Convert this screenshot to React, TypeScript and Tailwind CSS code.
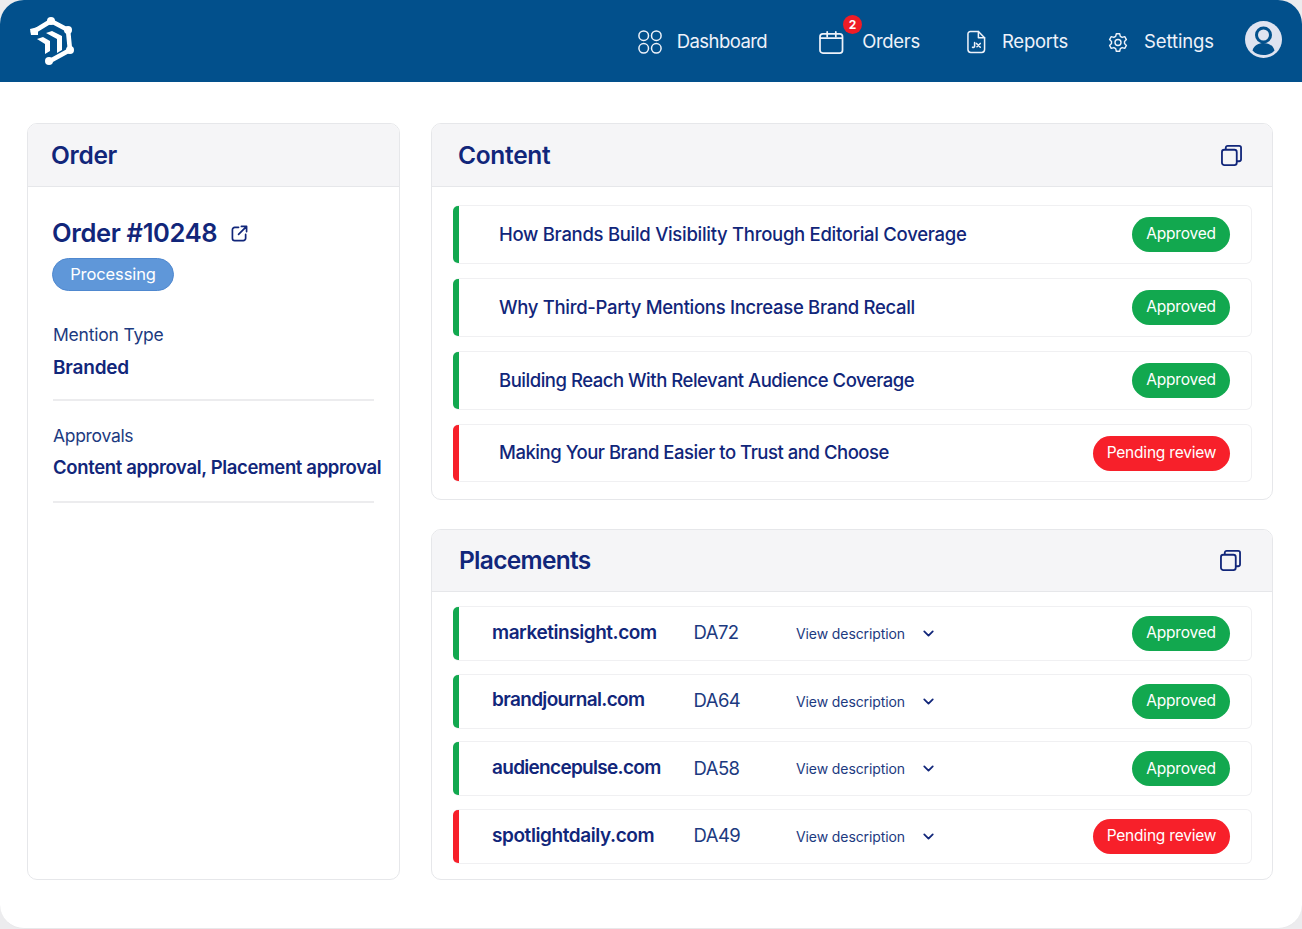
import React from 'react';
import { ChevronDown } from 'lucide-react';

const navy = 'text-[#11267a]';

function Logo() {
  return (
    <svg viewBox="28 15 48 52" className="w-[48px] h-[52px]" fill="none">
      <path d="M33 32 L51 21 L68 30 L70 50 L50 61" stroke="#fff" strokeWidth="4.6" strokeLinejoin="round" strokeLinecap="round" />
      <circle cx="51" cy="21" r="4" fill="#fff" />
      <circle cx="68" cy="30" r="4" fill="#fff" />
      <circle cx="70" cy="50" r="4" fill="#fff" />
      <circle cx="49" cy="61" r="4" fill="#fff" />
      <path d="M30 29 L38 27 L38 35 L31 35 Z" fill="#fff" />
      <path d="M46 33 L52 31 L62 36 L62 50 L57 53 L57 39 Z" fill="#fff" />
      <path d="M37 39 L43 37 L50 41 L50 51 L45 54 L45 44 Z" fill="#fff" />
    </svg>
  );
}

function DashIcon() {
  return (
    <svg viewBox="0 0 24 24" className="w-[24px] h-[24px]" fill="none" stroke="#eef2fa" strokeWidth="1.5">
      <circle cx="5.7" cy="5.7" r="4.8" />
      <circle cx="18.3" cy="5.7" r="4.8" />
      <circle cx="5.7" cy="18.3" r="4.8" />
      <circle cx="18.3" cy="18.3" r="4.8" />
    </svg>
  );
}

function CalendarIcon() {
  return (
    <svg viewBox="0 0 26 24" className="w-[25px] h-[23px]" fill="none" stroke="#eef2fa" strokeWidth="1.8" strokeLinecap="round">
      <rect x="1" y="3" width="23.5" height="20" rx="3" />
      <path d="M1.5 7.5 H24" />
      <path d="M8.5 1 V6 M17.5 1 V6" />
    </svg>
  );
}

function ReportIcon() {
  return (
    <svg viewBox="0 0 20 24" className="w-[19px] h-[24px]" fill="none" stroke="#eef2fa" strokeWidth="1.6" strokeLinejoin="round" strokeLinecap="round">
      <path d="M3.5 1 H12 L18.5 7.5 V20 A3 3 0 0 1 15.5 23 H4 A3 3 0 0 1 1 20 V3.5 A2.5 2.5 0 0 1 3.5 1 Z" />
      <path d="M12 1 V7.5 H18.5" />
      <path d="M8 12.5 V16.5 A1.5 1.5 0 0 1 5.8 17.5 M10 13.5 L14 17.5 M14 13.5 L10.5 17" />
    </svg>
  );
}

function GearIcon() {
  return (
    <svg viewBox="0 0 24 24" className="w-[20px] h-[21px]" fill="none" stroke="#eef2fa" strokeWidth="1.7" strokeLinejoin="round">
      <path d="M10 1.5 H14 L14.8 4.6 L17 5.9 L20.1 5 L22.1 8.5 L19.8 10.7 V13.3 L22.1 15.5 L20.1 19 L17 18.1 L14.8 19.4 L14 22.5 H10 L9.2 19.4 L7 18.1 L3.9 19 L1.9 15.5 L4.2 13.3 V10.7 L1.9 8.5 L3.9 5 L7 5.9 L9.2 4.6 Z" />
      <circle cx="12" cy="12" r="3.6" />
    </svg>
  );
}

function Avatar() {
  return (
    <svg viewBox="0 0 37 37" className="w-[37px] h-[37px] mb-[5px]">
      <circle cx="18.5" cy="18.5" r="18.5" fill="#dfe3f0" />
      <circle cx="18.5" cy="14" r="7" fill="none" stroke="#02508c" strokeWidth="3" />
      <path d="M7.5 29.5 C9 24 14 22 18.5 22 C23 22 28 24 29.5 29.5 C26.5 33 22.5 34 18.5 34 C14.5 34 10.5 33 7.5 29.5 Z" fill="#02508c" />
    </svg>
  );
}

function CopyIcon() {
  return (
    <svg viewBox="0 0 22 22" className="w-[21px] h-[21px]" fill="none" stroke="#11267a" strokeWidth="1.9" strokeLinejoin="round">
      <rect x="1" y="5" width="15.5" height="16" rx="2.5" />
      <path d="M5 5 V3 A2 2 0 0 1 7 1 H19 A2 2 0 0 1 21 3 V15 A2 2 0 0 1 19 17 H16.5" />
    </svg>
  );
}

function ExternalIcon() {
  return (
    <svg viewBox="0 0 18 18" className="w-[17px] h-[17px]" fill="none" stroke="#11267a" strokeWidth="1.8" strokeLinecap="round" strokeLinejoin="round">
      <path d="M8 2.5 H4 A2.5 2.5 0 0 0 1.5 5 V14 A2.5 2.5 0 0 0 4 16.5 H13 A2.5 2.5 0 0 0 15.5 14 V10" />
      <path d="M8 10 L16 2 M11 1.5 H16.5 V7" />
    </svg>
  );
}

function StatusPill({ status }: { status: string }) {
  const approved = status === 'Approved';
  return (
    <span
      className={`flex items-center justify-center h-[35px] pb-[1px] rounded-full text-white text-[15.5px] font-normal tracking-[-0.2px] ${
        approved ? 'w-[98px] bg-[#12a84f]' : 'w-[137px] bg-[#f7202a]'
      }`}
    >
      {status}
    </span>
  );
}

function NavItem({ icon, label, className, labelClass }: { icon: React.ReactNode; label: string; className: string; labelClass: string }) {
  return (
    <div className={`flex items-center ${className}`}>
      {icon}
      <span className={`text-[18.5px] text-[#eef2fa] ${labelClass}`}>{label}</span>
    </div>
  );
}

function Card({ title, titleClass, children, className }: { title: string; titleClass: string; children: React.ReactNode; className: string }) {
  return (
    <section className={`rounded-[10px] border border-[#e6e7ea] bg-white overflow-hidden ${className}`}>
      <div className={`flex items-center justify-between bg-[#f5f5f7] border-b border-[#e6e7ea] ${titleClass}`}>
        <h2 className={`text-[24.5px] font-semibold ${navy}`}>{title}</h2>
        {title !== 'Order' && <CopyIcon />}
      </div>
      {children}
    </section>
  );
}

function Row({ status, className, children }: { status: string; className: string; children: React.ReactNode }) {
  const bar = status === 'Approved' ? 'bg-[#12a84f]' : 'bg-[#f7202a]';
  return (
    <div className={`flex rounded-[6px] border border-l-0 border-[#f0f0f2] bg-white ${className}`}>
      <div className={`w-[6px] rounded-l-[5px] ${bar}`} />
      <div className="flex flex-1 items-center justify-between pr-[21px]">
        {children}
        <StatusPill status={status} />
      </div>
    </div>
  );
}

const contentRows = [
  { title: 'How Brands Build Visibility Through Editorial Coverage', status: 'Approved', fit: 'tracking-[-0.29px]', h: 'h-[59px]' },
  { title: 'Why Third-Party Mentions Increase Brand Recall', status: 'Approved', fit: 'tracking-[-0.31px]', h: 'h-[59px]' },
  { title: 'Building Reach With Relevant Audience Coverage', status: 'Approved', fit: 'tracking-[-0.48px]', h: 'h-[59px]' },
  { title: 'Making Your Brand Easier to Trust and Choose', status: 'Pending review', fit: 'tracking-[-0.47px]', h: 'h-[58px]' },
];

const placementRows = [
  { domain: 'marketinsight.com', da: 'DA72', status: 'Approved', fit: 'tracking-[-0.45px]' },
  { domain: 'brandjournal.com', da: 'DA64', status: 'Approved', fit: 'tracking-[-0.65px]' },
  { domain: 'audiencepulse.com', da: 'DA58', status: 'Approved', fit: 'tracking-[-0.7px]' },
  { domain: 'spotlightdaily.com', da: 'DA49', status: 'Pending review', fit: 'tracking-[-0.42px]' },
];

export default function App() {
  return (
    <div className="w-[1302px] h-[929px] bg-[#ececee] font-['Inter',sans-serif]">
      <div className="h-full rounded-[24px] bg-white overflow-hidden border-b border-[#e8e8ea]">
        <header className="h-[82px] bg-[#02508c] flex items-center pl-[28px] pr-[20px]">
          <Logo />
          <nav className="ml-auto flex items-center pt-[2px]">
            <NavItem icon={<DashIcon />} label="Dashboard" className="gap-[15px] mr-[52px]" labelClass="tracking-[-0.55px]" />
            <div className="relative mr-[47px]">
              <NavItem icon={<CalendarIcon />} label="Orders" className="gap-[18px]" labelClass="tracking-[-0.3px]" />
              <span className="absolute left-[24px] top-[-13px] w-[19px] h-[19px] rounded-full bg-[#f01c26] text-white text-[12px] font-bold flex items-center justify-center">
                2
              </span>
            </div>
            <NavItem icon={<ReportIcon />} label="Reports" className="gap-[16px] mr-[40px]" labelClass="tracking-[-0.25px]" />
            <NavItem icon={<GearIcon />} label="Settings" className="gap-[16px] mr-[31px]" labelClass="tracking-[-0.1px]" />
            <Avatar />
          </nav>
        </header>

        <main className="flex gap-[31px] pl-[27px] pt-[41px]">
          <Card title="Order" titleClass="h-[63px] pl-[23px] tracking-[-0.3px]" className="w-[373px] h-[757px]">
            <div className="pl-[24px] pr-[25px] pt-[27px]">
              <div className="flex items-center gap-[14px]">
                <h1 className={`text-[25.5px] font-semibold tracking-[-0.35px] ${navy}`}>Order #10248</h1>
                <ExternalIcon />
              </div>
              <span className="mt-[6px] flex items-center justify-center w-[122px] h-[33px] pb-[1px] rounded-full bg-[#5f97d9] border border-[#4f88cf] text-white text-[16.5px] tracking-[-0.1px]">
                Processing
              </span>
              <div className="ml-[1px] mt-[32px] text-[17.5px] text-[#1c3a80] tracking-[-0.2px] leading-[24px]">Mention Type</div>
              <div className={`ml-[1px] mt-[9px] text-[19px] font-semibold tracking-[-0.2px] leading-[24px] ${navy}`}>Branded</div>
              <div className="ml-[1px] mt-[19px] w-[321px] h-[2px] bg-[#ececee]" />
              <div className="ml-[1px] mt-[23px] text-[17.5px] text-[#1c3a80] tracking-[-0.3px] leading-[24px]">Approvals</div>
              <div className={`ml-[1px] mt-[7px] text-[18.5px] font-semibold tracking-[-0.35px] leading-[24px] whitespace-nowrap ${navy}`}>
                Content approval, Placement approval
              </div>
              <div className="ml-[1px] mt-[22px] w-[321px] h-[2px] bg-[#ececee]" />
            </div>
          </Card>

          <div className="w-[842px] flex flex-col gap-[29px]">
            <Card title="Content" titleClass="h-[63px] pl-[26px] pr-[30px] tracking-[-0.3px]" className="h-[377px]">
              <div className="pl-[21px] pr-[20px] pt-[18px] flex flex-col gap-[14px]">
                {contentRows.map((row) => (
                  <Row key={row.title} status={row.status} className={row.h}>
                    <span className={`ml-[40px] text-[18.5px] font-medium ${row.fit} ${navy}`}>{row.title}</span>
                  </Row>
                ))}
              </div>
            </Card>

            <Card title="Placements" titleClass="h-[62px] pl-[27px] pr-[31px] tracking-[-0.7px]" className="h-[351px]">
              <div className="pl-[21px] pr-[20px] pt-[14px] flex flex-col gap-[12.7px]">
                {placementRows.map((row) => (
                  <Row key={row.domain} status={row.status} className="h-[55px]">
                    <div className="flex items-center ml-[33px]">
                      <span className={`w-[201.5px] pb-[1px] text-[19px] font-semibold ${row.fit} ${navy}`}>{row.domain}</span>
                      <span className="w-[102.5px] pb-[1px] text-[18.5px] text-[#1c3a80] tracking-[-0.55px]">{row.da}</span>
                      <span className="w-[124px] text-[14px] text-[#1c3a80] tracking-[-0.1px]">View description</span>
                      <ChevronDown size={17} strokeWidth={2.5} className="text-[#11267a]" />
                    </div>
                  </Row>
                ))}
              </div>
            </Card>
          </div>
        </main>
      </div>
    </div>
  );
}
